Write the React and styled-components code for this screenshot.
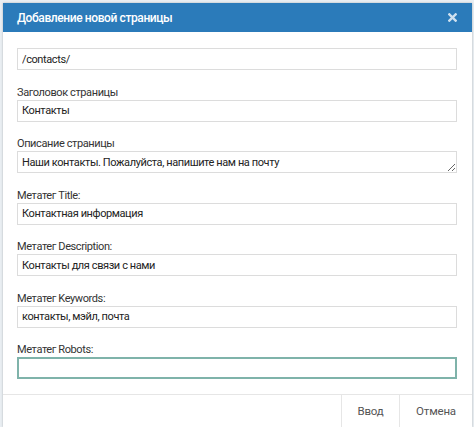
import styled, { createGlobalStyle } from 'styled-components';

const GlobalStyle = createGlobalStyle`
  html, body {
    margin: 0;
    padding: 0;
    background: #e9eef2;
  }
  body {
    font-family: Roboto, 'Open Sans', sans-serif;
  }
`;

const Page = styled.div`
  padding: 3px 2px 0 3px;
  height: 427px;
  box-sizing: border-box;
  overflow: hidden;
`;

const Modal = styled.div`
  background: #fff;
  height: 100%;
  display: flex;
  flex-direction: column;
  box-shadow: 0 0 2px rgba(0, 0, 0, 0.25);
`;

const Header = styled.div`
  height: 29px;
  background: #2b7bba;
  display: flex;
  align-items: center;
  justify-content: space-between;
  padding: 0 15px 0 14px;
  flex-shrink: 0;
`;

const Title = styled.h4`
  margin: 0;
  color: #fff;
  font-size: 12px;
  font-weight: 500;
  letter-spacing: -0.4px;
`;

const CloseButton = styled.button`
  background: none;
  border: none;
  padding: 0;
  width: 10px;
  height: 10px;
  display: flex;
  align-items: center;
  justify-content: center;
  cursor: pointer;
  svg {
    width: 9px;
    height: 9px;
    stroke: #cfe1ef;
  }
`;

const Body = styled.div`
  padding: 16px 15px 15px 14px;
  display: flex;
  flex-direction: column;
  gap: 14.5px;
`;

const Field = styled.div`
  display: flex;
  flex-direction: column;
`;

const Label = styled.label`
  font-size: 11px;
  line-height: 15px;
  color: #333;
  letter-spacing: -0.4px;
`;

const Input = styled.input`
  box-sizing: border-box;
  width: 100%;
  height: 22px;
  margin: 0;
  padding: 0 4px;
  border: ${({ $focused }) => ($focused ? '2px solid #7fb3aa' : '1px solid #dcdcdc')};
  background: #fff;
  font-family: inherit;
  font-size: 11px;
  letter-spacing: -0.4px;
  color: #222;
  outline: none;
`;

const TextArea = styled.textarea`
  box-sizing: border-box;
  width: 100%;
  height: 22px;
  margin: 0;
  padding: 3px 4px 0;
  border: 1px solid #dcdcdc;
  font-family: inherit;
  font-size: 11px;
  letter-spacing: -0.4px;
  line-height: 15px;
  color: #222;
  overflow: hidden;
  resize: vertical;
  outline: none;
`;

const Footer = styled.div`
  border-top: 1px solid #e6e6e6;
  display: flex;
  justify-content: flex-end;
  flex: 1;
`;

const FooterButton = styled.button`
  background: #fff;
  border: none;
  border-left: 1px solid #e6e6e6;
  width: ${({ $w }) => $w}px;
  height: 32px;
  padding: 0;
  font-family: inherit;
  font-size: 11.5px;
  letter-spacing: -0.2px;
  color: #555;
  cursor: pointer;
`;

const fields = [
  { key: 'title', label: 'Заголовок страницы', value: 'Контакты' },
  { key: 'desc', label: 'Описание страницы', value: 'Наши контакты. Пожалуйста, напишите нам на почту', area: true },
  { key: 'mtitle', label: 'Метатег Title:', value: 'Контактная информация' },
  { key: 'mdesc', label: 'Метатег Description:', value: 'Контакты для связи с нами' },
  { key: 'mkeys', label: 'Метатег Keywords:', value: 'контакты, мэйл, почта' },
  { key: 'mrobots', label: 'Метатег Robots:', value: '', focused: true },
];

export default function App() {
  return (
    <>
      <GlobalStyle />
      <Page>
        <Modal>
          <Header>
            <Title>Добавление новой страницы</Title>
            <CloseButton aria-label="Закрыть">
              <svg viewBox="0 0 10 10" fill="none" strokeWidth="2.6" strokeLinecap="square">
                <path d="M1.5 1.5l7 7M8.5 1.5l-7 7" />
              </svg>
            </CloseButton>
          </Header>
          <Body>
            <Field>
              <Input defaultValue="/contacts/" />
            </Field>
            {fields.map((f) => (
              <Field key={f.key}>
                <Label>{f.label}</Label>
                {f.area ? (
                  <TextArea defaultValue={f.value} rows={1} />
                ) : (
                  <Input defaultValue={f.value} $focused={f.focused} />
                )}
              </Field>
            ))}
          </Body>
          <Footer>
            <FooterButton $w={58}>Ввод</FooterButton>
            <FooterButton $w={73}>Отмена</FooterButton>
          </Footer>
        </Modal>
      </Page>
    </>
  );
}
